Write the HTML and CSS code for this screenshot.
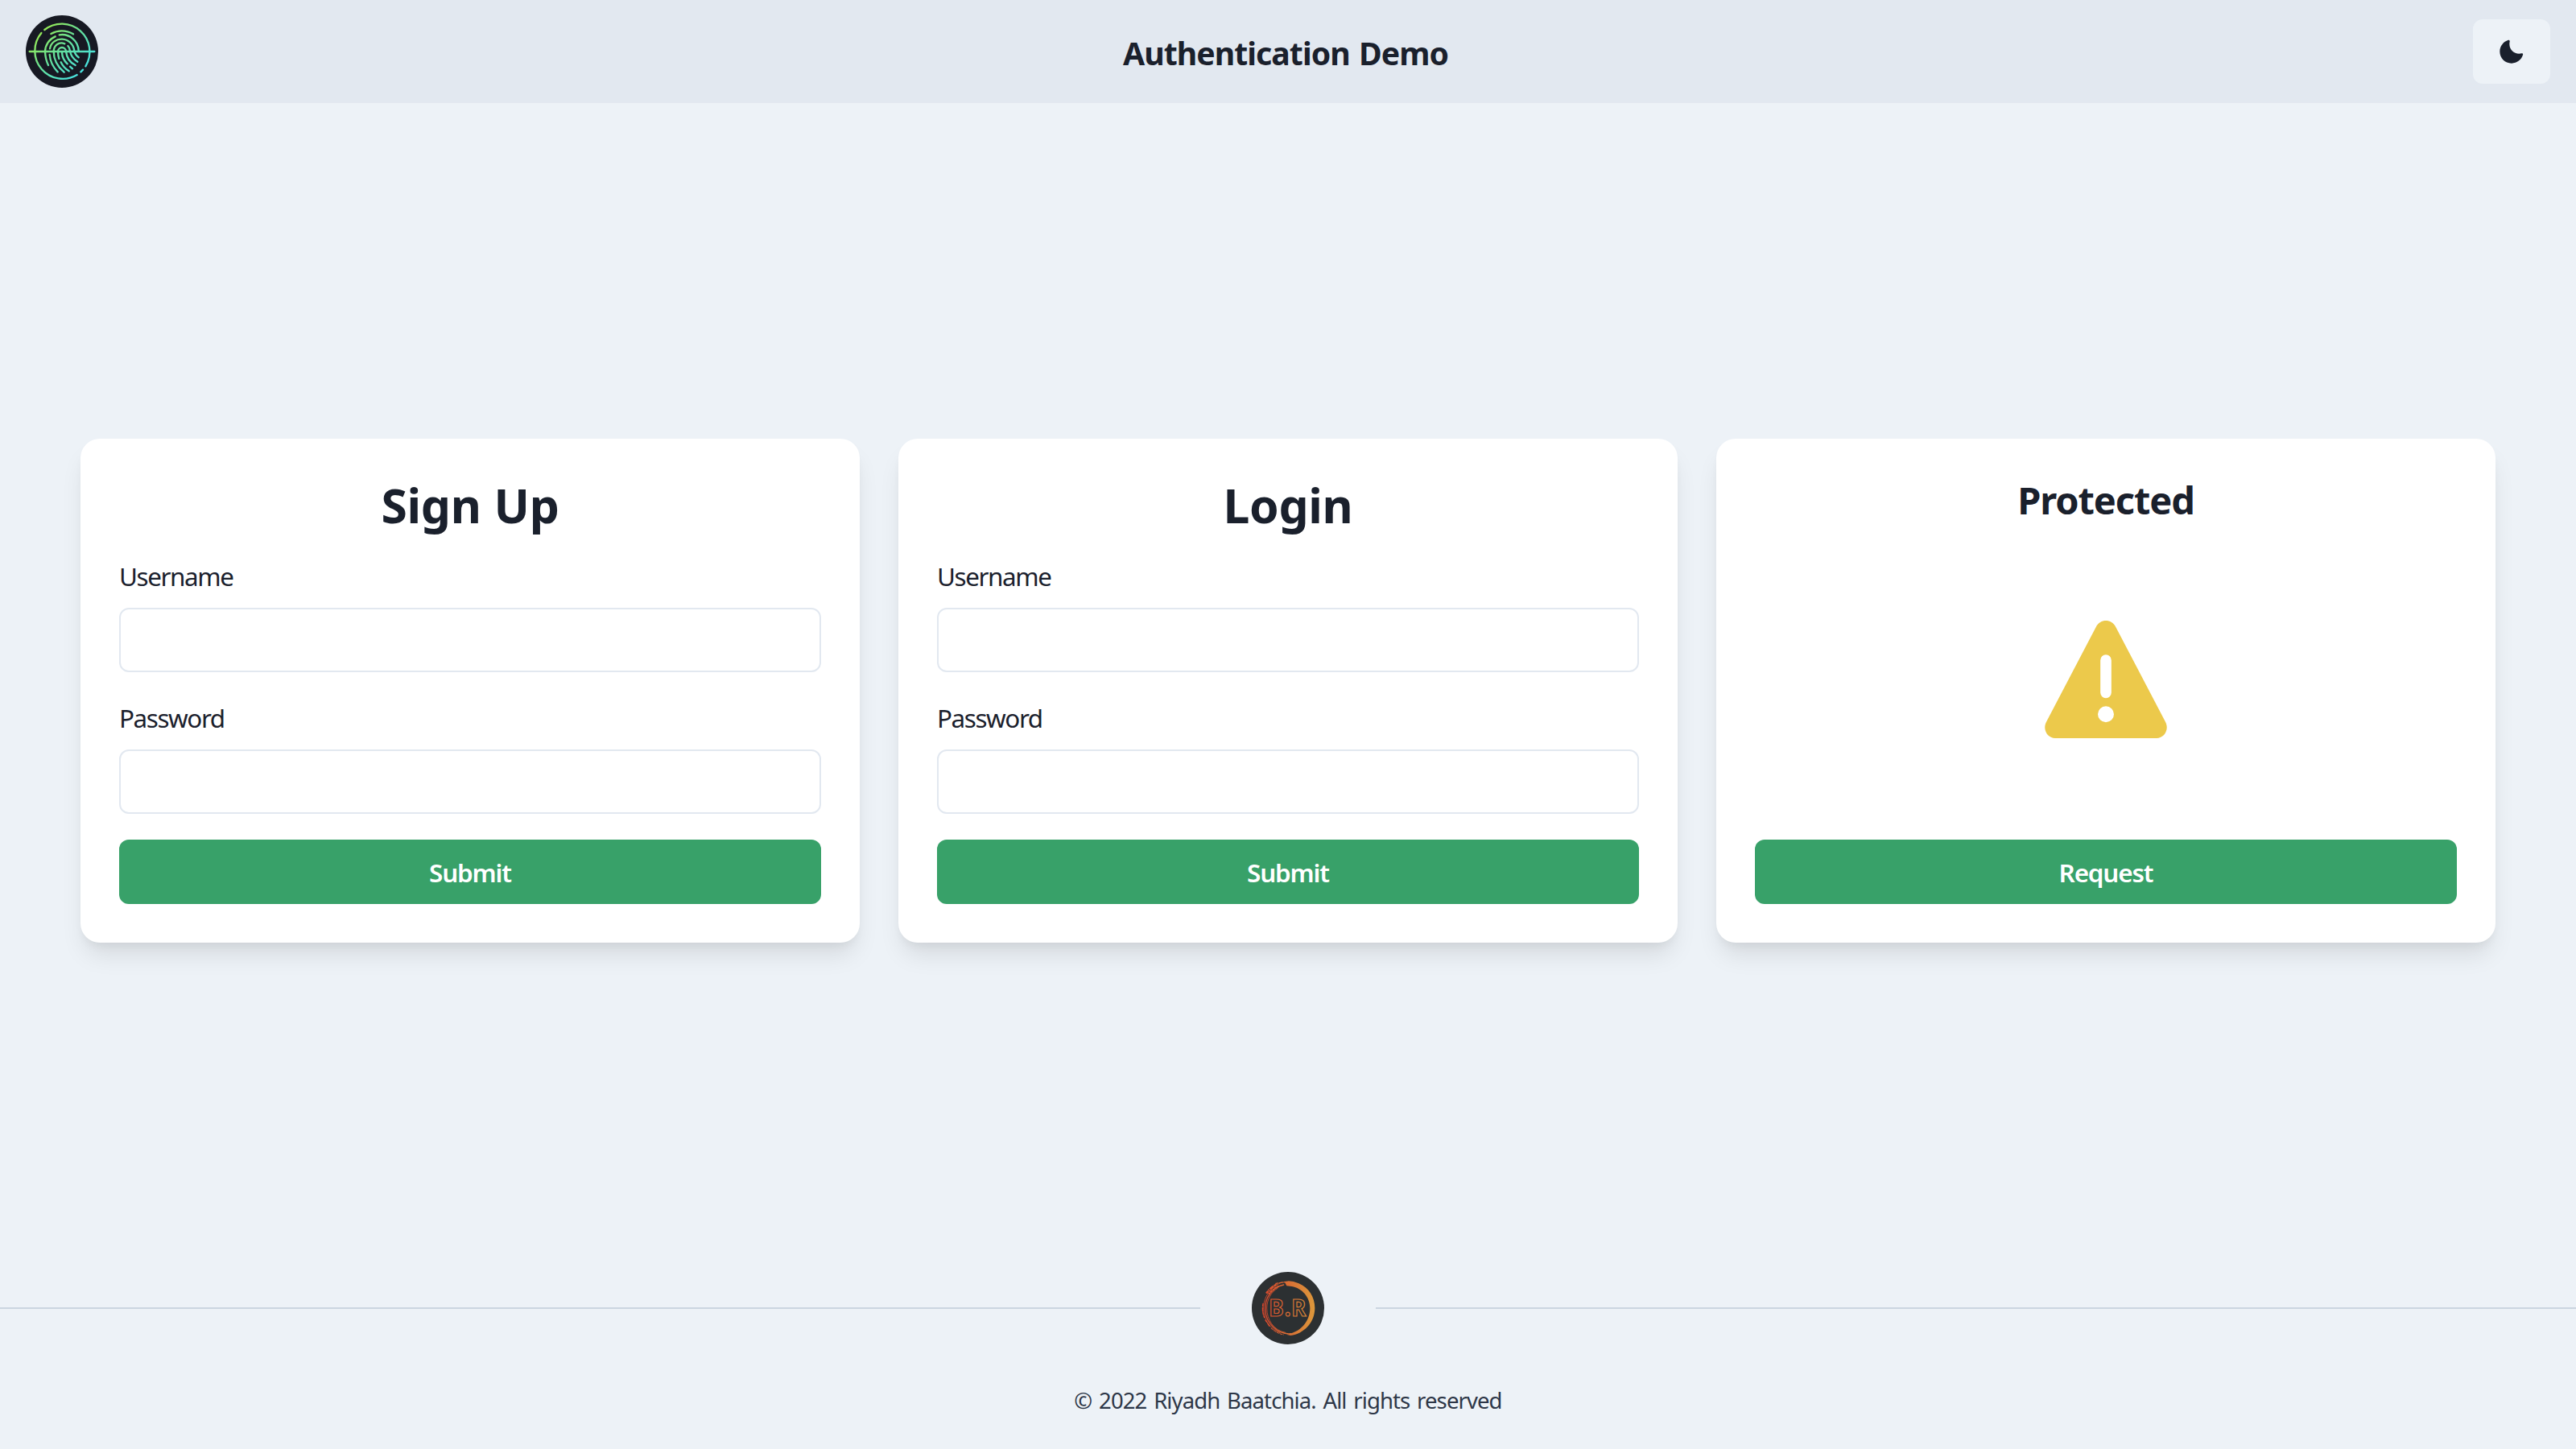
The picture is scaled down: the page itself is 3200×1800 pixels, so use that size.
FILE: index.html
```html
<!DOCTYPE html>
<html lang="en">
<head>
<meta charset="utf-8">
<title>Authentication Demo</title>
<link rel="stylesheet" href="styles.css">
</head>
<body>
<header class="header">
  <svg class="logo" viewBox="96 57 270 270" aria-label="Fingerprint">
    <defs>
      <linearGradient id="scan" gradientUnits="userSpaceOnUse" x1="140" y1="110" x2="310" y2="285">
        <stop offset="0" stop-color="#9bea4c"/><stop offset=".5" stop-color="#62dfa0"/><stop offset="1" stop-color="#45e3ea"/>
      </linearGradient>
    </defs>
    <circle cx="231" cy="192" r="135" fill="#171923"/>
    <g fill="none" stroke="url(#scan)" stroke-width="7" stroke-linecap="round">
      <path d="M166 111A104 104 0 0 1 319 247M309 260L301 268M287 279A104 104 0 0 1 154 123M110 192H352"/>
      <path d="M190 126Q231 104 273 127M206 136A62 62 0 0 0 168 192Q169 220 180 243M221 130A62 62 0 0 1 293 190"/>
      <path d="M186 181C194 133 270 133 277 190Q280 205 293 214M185 204Q188 240 215 268"/>
      <path d="M241 163C219 154 200 170 200 192Q200 237 239 269M253 171Q260 178 261 190Q265 215 289 230"/>
      <path d="M220 219Q216 206 216 192A15 15 0 0 1 246 192Q250 228 281 243M231 196Q232 220 251 238M227 232Q237 253 257 265M261 248L270 256"/>
    </g>
  </svg>
  <h1 class="title">Authentication Demo</h1>
  <button class="toggle" aria-label="Toggle theme">
    <svg class="moon" viewBox="0 0 24 24"><path fill="currentColor" d="M21.4,13.7C20.6,13.9,19.8,14,19,14c-5,0-9-4-9-9c0-0.8,0.1-1.6,0.3-2.4c0.1-0.3,0-0.7-0.3-1c-0.3-0.3-0.6-0.4-1-0.3C4.3,2.7,1,7.1,1,12c0,6.1,4.9,11,11,11c4.9,0,9.3-3.3,10.6-8.1c0.1-0.3,0-0.7-0.3-1C22.1,13.7,21.7,13.6,21.4,13.7z"/></svg>
  </button>
</header>
<main class="main">
  <form class="card">
    <h2 class="heading">Sign Up</h2>
    <div class="field"><label class="label" for="su">Username</label><input class="input" id="su" type="text"></div>
    <div class="field"><label class="label" for="sp">Password</label><input class="input" id="sp" type="password"></div>
    <button class="button" type="button">Submit</button>
  </form>
  <form class="card">
    <h2 class="heading">Login</h2>
    <div class="field"><label class="label" for="lu">Username</label><input class="input" id="lu" type="text"></div>
    <div class="field"><label class="label" for="lp">Password</label><input class="input" id="lp" type="password"></div>
    <button class="button" type="button">Submit</button>
  </form>
  <section class="card">
    <h2 class="heading heading-small">Protected</h2>
    <div class="status">
      <svg class="warning" viewBox="180 632 456 439"><path fill="#ecc94b" fill-rule="evenodd" d="M371 656C387 624 429 624 445 656L630 1009C645 1037 626 1070 597 1070H219C190 1070 171 1037 186 1009ZM408 759A20.500 20.500 0 0 0 387.500 779.500V900A20.500 20.500 0 0 0 428.500 900V779.500A20.500 20.500 0 0 0 408 759ZM408 951A30 30 0 0 0 408 1011A30 30 0 0 0 408 951Z"/></svg>
    </div>
    <button class="button" type="button">Request</button>
  </section>
</main>
<footer class="footer">
  <div class="divider">
    <hr class="rule">
    <svg class="brand" viewBox="255 60 270 270" aria-label="B.R">
      <defs>
        <linearGradient id="ember" gradientUnits="userSpaceOnUse" x1="295" y1="0" x2="485" y2="0">
          <stop offset="0" stop-color="#dc452c"/><stop offset=".5" stop-color="#d96e34"/><stop offset="1" stop-color="#dc963b"/>
        </linearGradient>
      </defs>
      <circle cx="390" cy="195" r="135" fill="#2c3032"/>
      <path fill="url(#ember)" d="M377 97L392 94L410 96L430 103C467 119 490 153 490 195C490 249 448 291 400 297L383 293C434 287 472 246 472 195C472 154 442 120 404 114L385 112Z"/>
      <g fill="none" stroke="url(#ember)" stroke-linecap="round">
        <path stroke-width="4" d="M402 290C352 295 307 252 305 200C303 156 332 117 374 108"/>
        <path stroke-width="2.500" d="M360 287C325 274 300 240 299 199C297 155 325 116 367 99M380 286C338 279 311 240 311 195C311 163 328 133 351 121"/>
        <path stroke-width="7" stroke-linecap="butt" stroke-dasharray="11 2 5 3 17 2" d="M309 140Q325 117 350 105"/>
        <path stroke-width="6" stroke-linecap="butt" stroke-dasharray="6 2 11 2" d="M318 143Q334 122 356 113"/>
        <path stroke-width="4" stroke-dasharray="9 5 14 4" d="M345 103L384 97M297 178Q292 207 302 230M306 240L321 262"/>
        <path stroke-width="3" stroke-dasharray="8 5" d="M327 270Q348 289 373 294"/>
      </g>
      <text class="initials" fill="none" stroke="url(#ember)" x="319 377 403" y="225">B.R</text>
    </svg>
    <hr class="rule">
  </div>
  <p class="copyright">© 2022 Riyadh Baatchia. All rights reserved</p>
</footer>
</body>
</html>
```
FILE: styles.css
```css
* { box-sizing: border-box; margin: 0; }
body {
  display: flex;
  flex-direction: column;
  min-height: 100vh;
  background: #edf2f7;
  color: #1a202c;
  font: 31.4px/50px "Noto Sans", sans-serif;
}
.header {
  display: flex;
  align-items: center;
  justify-content: space-between;
  height: 128px;
  padding: 0 32px;
  background: #e2e8f0;
}
.logo, .brand { display: block; width: 90px; height: 90px; flex: none; }
.title { padding-top: 4px; font-size: 39.2px; line-height: 48px; font-weight: 700; letter-spacing: -.95px; word-spacing: 2px; }
.toggle {
  display: flex;
  align-items: center;
  justify-content: center;
  width: 96px;
  height: 80px;
  border: 0;
  border-radius: 12px;
  background: #edf2f7;
  color: inherit;
}
.moon { width: 32px; height: 32px; }
.main {
  display: grid;
  flex: 1;
  grid-template-columns: repeat(3, 968px);
  gap: 48px;
  place-content: center;
  padding-top: 8px;
}
.card {
  display: flex;
  flex-direction: column;
  gap: 32px;
  height: 626px;
  padding: 48px;
  border-radius: 24px;
  background: #fff;
  box-shadow: 0 20px 30px -6px rgba(0, 0, 0, .1), 0 8px 12px -4px rgba(0, 0, 0, .05);
}
.heading { margin-bottom: -2px; font-size: 58.8px; line-height: 68px; font-weight: 700; letter-spacing: -.3px; word-spacing: 1px; text-align: center; }
.heading-small { margin-bottom: 0; font-size: 47px; line-height: 57px; letter-spacing: -1.1px; }
.label { display: block; margin-bottom: 14px; letter-spacing: -1.4px; }
.input {
  display: block;
  width: 100%;
  height: 80px;
  padding: 0 32px;
  border: 2px solid #e2e8f0;
  border-radius: 12px;
  background: #fff;
  font: inherit;
}
.button {
  height: 80px;
  flex: none;
  padding-top: 2px;
  border: 0;
  border-radius: 12px;
  background: #38a169;
  color: #fff;
  font: 600 31.4px/38px "Noto Sans", sans-serif;
  letter-spacing: -1.15px;
}
.status { display: flex; flex: 1; align-items: center; justify-content: center; padding-bottom: 5px; }
.warning { width: 152px; height: 146.3px; }
.footer { height: 220px; }
.divider { display: flex; align-items: center; gap: 64px; }
.rule { flex: 1; height: 2px; border: 0; background: #cbd5e0; }
.initials { font: 700 83px "Noto Sans", sans-serif; stroke-width: 3.5px; }
.copyright { margin-top: 49px; color: #2d3748; font-size: 27.5px; line-height: 42px; letter-spacing: -.9px; word-spacing: 2.5px; text-align: center; }
```
